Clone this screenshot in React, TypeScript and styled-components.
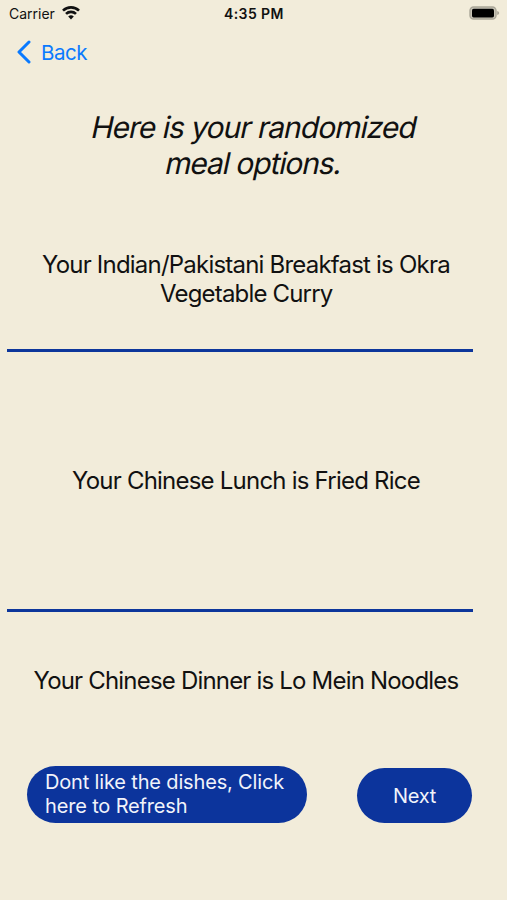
import React from "react";
import styled, { createGlobalStyle } from "styled-components";

const GlobalStyle = createGlobalStyle`
  * { box-sizing: border-box; }
  body { margin: 0; background: #f2ecda; }
`;

const Screen = styled.main`
  width: 507px;
  height: 900px;
  overflow: hidden;
  display: flex;
  flex-direction: column;
  background: #f2ecda;
  color: #111;
  font-family: Inter, sans-serif;
`;

const StatusBar = styled.header`
  height: 28px;
  padding: 0 7px 2px 9px;
  display: grid;
  grid-template-columns: 1fr auto 1fr;
  align-items: center;
`;

const Carrier = styled.div`
  display: flex;
  align-items: center;
  gap: 7px;
`;

const BatterySlot = styled.div`
  display: flex;
  justify-content: flex-end;
`;

const NavBar = styled.nav`
  height: 48px;
  padding-left: 16px;
  display: flex;
  align-items: center;
  color: #0a7aff;
`;

const BackButton = styled.button`
  display: flex;
  align-items: center;
  gap: 9px;
  padding: 0;
  border: 0;
  background: none;
  color: inherit;
  font: inherit;
`;

const Line = styled.span<{ $size: number; $width: number; $weight?: number; $track?: number }>`
  display: block;
  white-space: nowrap;
  font-size: ${(p) => p.$size}px;
  font-weight: ${(p) => p.$weight ?? 400};
  letter-spacing: ${(p) => p.$track ?? 0}px;
  width: ${(p) => p.$width}px;
`;

const SlantedLine = styled(Line)`
  transform: skewX(-12deg);
`;

const Title = styled.h1`
  margin: 33px 0 0;
  display: flex;
  flex-direction: column;
  align-items: center;
  line-height: 36px;
`;

const Meal = styled.section<{ $height: number; $top: number }>`
  height: ${(p) => p.$height}px;
  padding-top: ${(p) => p.$top}px;
  padding-right: 15px;
  display: flex;
  flex-direction: column;
  align-items: center;
  line-height: 29px;
`;

const Divider = styled.hr`
  flex: none;
  width: 466px;
  height: 3px;
  margin: 0 0 0 7px;
  border: 0;
  background: #0d369b;
`;

const Actions = styled.footer`
  display: flex;
  align-items: flex-end;
  padding-left: 27px;
  gap: 50px;
`;

const Pill = styled.button<{ $width: number; $height: number; $left: number; $lift?: number }>`
  width: ${(p) => p.$width}px;
  height: ${(p) => p.$height}px;
  padding: 0 0 ${(p) => p.$lift ?? 0}px ${(p) => p.$left}px;
  border: 0;
  border-radius: 29px;
  background: #0c349c;
  color: #f1f3fa;
  font: inherit;
  line-height: 24px;
  text-align: left;
`;

export default function App() {
  return (
    <Screen>
      <GlobalStyle />
      <StatusBar>
        <Carrier>
          <Line $size={14} $width={46}>Carrier</Line>
          <svg width="18" height="14" viewBox="0 0 18 14" fill="none" stroke="#111" strokeWidth="2.6">
            <path d="M1 4.7a11.3 11.3 0 0 1 16 0M4 7.9a7.1 7.1 0 0 1 10 0" />
            <path d="M9 13.4 6.2 10.5a4 4 0 0 1 5.6 0z" fill="#111" stroke="none" />
          </svg>
        </Carrier>
        <Line $size={14} $width={61} $weight={600} $track={0.4}>4:35 PM</Line>
        <BatterySlot>
          <svg width="31" height="14" viewBox="0 0 31 14">
            <rect x="1" y="1" width="26" height="12" rx="3.6" fill="#c9c5b7" stroke="#aaa698" strokeWidth="1.4" />
            <rect x="3" y="2.8" width="22" height="8.6" rx="1.6" fill="#000" />
            <path d="M28.2 4.9q2 .5 2 2.1t-2 2.1z" fill="#aaa698" />
          </svg>
        </BatterySlot>
      </StatusBar>
      <NavBar>
        <BackButton>
          <svg width="16" height="24" viewBox="0 0 16 24" fill="none" stroke="currentColor" strokeWidth="3" strokeLinecap="round" strokeLinejoin="round">
            <path d="M13 2 3 12l10 10" />
          </svg>
          <Line $size={20.5} $width={46} $track={-0.5}>Back</Line>
        </BackButton>
      </NavBar>
      <Title>
        <SlantedLine $size={30} $width={324} $track={-1}>Here is your randomized</SlantedLine>
        <SlantedLine $size={30} $width={176} $track={-1.1}>meal options.</SlantedLine>
      </Title>
      <Meal $height={168} $top={69}>
        <Line $size={24} $width={408} $track={-0.79}>Your Indian/Pakistani Breakfast is Okra</Line>
        <Line $size={24} $width={172} $track={-0.82}>Vegetable Curry</Line>
      </Meal>
      <Divider />
      <Meal $height={257} $top={114}>
        <Line $size={24} $width={348} $track={-0.78}>Your Chinese Lunch is Fried Rice</Line>
      </Meal>
      <Divider />
      <Meal $height={154} $top={54}>
        <Line $size={24} $width={425} $track={-0.81}>Your Chinese Dinner is Lo Mein Noodles</Line>
      </Meal>
      <Actions>
        <Pill $width={280} $height={57} $left={18} $lift={1}>
          <Line $size={20} $width={240} $track={-0.16}>Dont like the dishes, Click</Line>
          <Line $size={20} $width={143} $track={-0.16}>here to Refresh</Line>
        </Pill>
        <Pill $width={115} $height={55} $left={36}>
          <Line $size={20} $width={43} $track={-0.3}>Next</Line>
        </Pill>
      </Actions>
    </Screen>
  );
}
